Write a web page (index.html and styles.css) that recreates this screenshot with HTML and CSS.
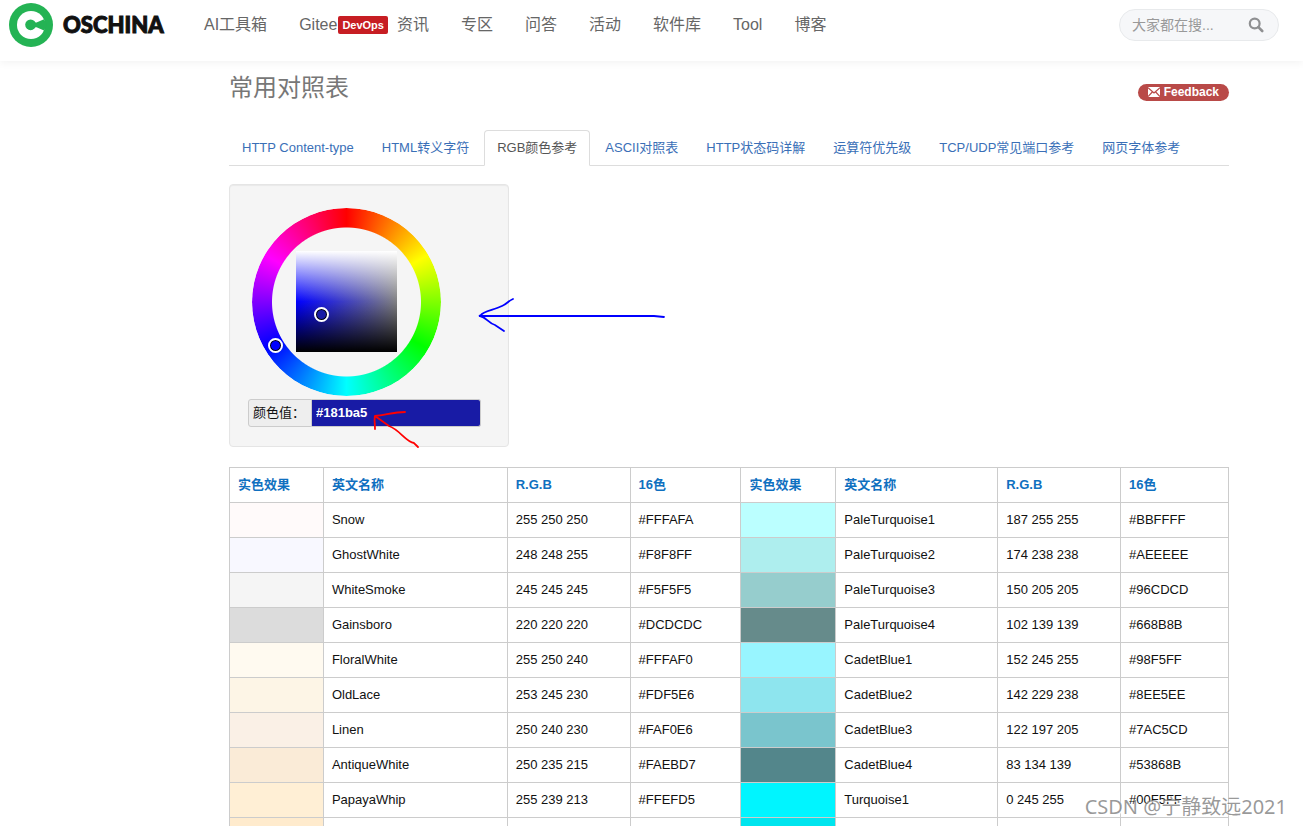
FILE: index.html
```html
<!DOCTYPE html>
<html lang="zh-CN">
<head>
<meta charset="utf-8">
<title>常用对照表</title>
<link rel="stylesheet" href="styles.css">
</head>
<body>
<div class="page">
  <header class="site-header">
    <a class="logo" href="#">
      <svg class="logo-mark" viewBox="0 0 44 44" aria-hidden="true">
        <circle cx="22" cy="22" r="22" fill="#24b354"/>
        <circle cx="22" cy="22" r="14" fill="#fff"/>
        <circle cx="21.6" cy="21.8" r="5.4" fill="#24b354"/>
        <path d="M22 19.6H27.5L35 16.2L38 22L35 27.6L27.5 24.2H22Z" fill="#24b354"/>
      </svg>
      <span class="logo-text">OSCHINA</span>
    </a>
    <nav class="main-nav">
      <a href="#">AI工具箱</a>
      <a class="with-badge" href="#">Gitee<span class="badge">DevOps</span></a>
      <a href="#">资讯</a>
      <a href="#">专区</a>
      <a href="#">问答</a>
      <a href="#">活动</a>
      <a href="#">软件库</a>
      <a href="#">Tool</a>
      <a href="#">博客</a>
    </nav>
    <form class="search">
      <input class="search-input" type="text" placeholder="大家都在搜..." aria-label="搜索">
      <button class="search-button" type="button" aria-label="搜索">
        <svg viewBox="0 0 16 16" aria-hidden="true"><circle cx="6.7" cy="6.5" r="4.9" fill="none" stroke="#8f9092" stroke-width="2.2"/><path d="M10.4 10.2L14.2 14" stroke="#8f9092" stroke-width="2.6" stroke-linecap="round"/></svg>
      </button>
    </form>
  </header>

  <main class="content">
    <div class="title-row">
      <h1>常用对照表</h1>
      <a class="feedback" href="#">
        <svg viewBox="0 0 12 10" aria-hidden="true"><path d="M0 0H12V10H0Z" fill="#fff"/><path d="M0 .6L6 6L12 .6M0 9.6L4.3 5M12 9.6L7.7 5" fill="none" stroke="#b94a48" stroke-width="1.2"/></svg>
        Feedback
      </a>
    </div>

    <nav class="tabs">
      <a href="#">HTTP Content-type</a>
      <a href="#">HTML转义字符</a>
      <a class="active" href="#">RGB颜色参考</a>
      <a href="#">ASCII对照表</a>
      <a href="#">HTTP状态码详解</a>
      <a href="#">运算符优先级</a>
      <a href="#">TCP/UDP常见端口参考</a>
      <a href="#">网页字体参考</a>
    </nav>

    <section class="picker">
      <div class="wheel">
        <div class="ring"></div>
        <div class="shade"></div>
        <span class="marker marker-hue"></span>
        <span class="marker marker-shade"></span>
      </div>
      <div class="color-field">
        <label for="color">颜色值：</label>
        <input id="color" type="text" value="#181ba5">
      </div>
      <svg class="pen" viewBox="0 0 440 160" aria-hidden="true">
        <path d="M283 14C278 16 277 19 272 21C264 25 253 26 251 30L249 31L424 31L434 32" fill="none" stroke="#00f" stroke-width="1.8" stroke-linecap="round"/>
        <path d="M250 31C256 32 258 38 265 40L274 46" fill="none" stroke="#00f" stroke-width="1.8" stroke-linecap="round"/>
        <path d="M175 127C165 127 155 130 145 131C144 134 145 138 145 144M145 131L159 141C170 145 176 157 184 158L188 162" fill="none" stroke="#f00" stroke-width="1.8" stroke-linecap="round"/>
      </svg>
    </section>

    <table class="colors">
      <thead>
        <tr><th class="w-a">实色效果</th><th class="w-b">英文名称</th><th class="w-c">R.G.B</th><th class="w-d">16色</th><th class="w-e">实色效果</th><th class="w-f">英文名称</th><th class="w-c">R.G.B</th><th class="w-g">16色</th></tr>
      </thead>
      <tbody>
        <tr><td style="background:#fffafa"></td><td>Snow</td><td>255 250 250</td><td>#FFFAFA</td><td style="background:#bbffff"></td><td>PaleTurquoise1</td><td>187 255 255</td><td>#BBFFFF</td></tr>
        <tr><td style="background:#f8f8ff"></td><td>GhostWhite</td><td>248 248 255</td><td>#F8F8FF</td><td style="background:#aeeeee"></td><td>PaleTurquoise2</td><td>174 238 238</td><td>#AEEEEE</td></tr>
        <tr><td style="background:#f5f5f5"></td><td>WhiteSmoke</td><td>245 245 245</td><td>#F5F5F5</td><td style="background:#96cdcd"></td><td>PaleTurquoise3</td><td>150 205 205</td><td>#96CDCD</td></tr>
        <tr><td style="background:#dcdcdc"></td><td>Gainsboro</td><td>220 220 220</td><td>#DCDCDC</td><td style="background:#668b8b"></td><td>PaleTurquoise4</td><td>102 139 139</td><td>#668B8B</td></tr>
        <tr><td style="background:#fffaf0"></td><td>FloralWhite</td><td>255 250 240</td><td>#FFFAF0</td><td style="background:#98f5ff"></td><td>CadetBlue1</td><td>152 245 255</td><td>#98F5FF</td></tr>
        <tr><td style="background:#fdf5e6"></td><td>OldLace</td><td>253 245 230</td><td>#FDF5E6</td><td style="background:#8ee5ee"></td><td>CadetBlue2</td><td>142 229 238</td><td>#8EE5EE</td></tr>
        <tr><td style="background:#faf0e6"></td><td>Linen</td><td>250 240 230</td><td>#FAF0E6</td><td style="background:#7ac5cd"></td><td>CadetBlue3</td><td>122 197 205</td><td>#7AC5CD</td></tr>
        <tr><td style="background:#faebd7"></td><td>AntiqueWhite</td><td>250 235 215</td><td>#FAEBD7</td><td style="background:#53868b"></td><td>CadetBlue4</td><td>83 134 139</td><td>#53868B</td></tr>
        <tr><td style="background:#ffefd5"></td><td>PapayaWhip</td><td>255 239 213</td><td>#FFEFD5</td><td style="background:#00f5ff"></td><td>Turquoise1</td><td>0 245 255</td><td>#00F5FF</td></tr>
        <tr><td style="background:#ffebcd"></td><td></td><td></td><td></td><td style="background:#00e5ee"></td><td></td><td></td><td></td></tr>
      </tbody>
    </table>
  </main>
  <div class="watermark">CSDN @宁静致远2021</div>
</div>
</body>
</html>
```

FILE: styles.css
```css
* { box-sizing: border-box; }

body {
  margin: 0;
  background: #fff;
  color: #111;
  font: 13px/18px "Liberation Sans", "Noto Sans CJK SC", sans-serif;
}

a { text-decoration: none; }

.page {
  position: relative;
  height: 100vh;
  overflow: hidden;
}

.site-header {
  display: flex;
  align-items: flex-start;
  height: 61px;
  padding: 0 24px 0 9px;
  box-shadow: 0 2px 8px rgba(0, 0, 0, 0.05);
}

.logo {
  display: flex;
  align-items: center;
  gap: 10px;
  width: 195px;
  padding-top: 3px;
  color: #111;
}

.logo-mark { width: 44px; height: 44px; }

.logo-text {
  font: 900 22px/32px Lato, sans-serif;
  -webkit-text-stroke: 1px #111;
}

.main-nav {
  display: flex;
  gap: 32px;
  flex: 1;
  padding-top: 13px;
  font-size: 16px;
  line-height: 24px;
  white-space: nowrap;
}

.main-nav a { color: #666; }

.main-nav .with-badge {
  display: flex;
  align-items: center;
  gap: 1px;
  margin-right: -23px;
}

.badge {
  padding: 0 4px;
  border-radius: 2px;
  background: #c71d23;
  color: #fff;
  font-size: 11px;
  font-weight: bold;
  line-height: 18px;
}

.search {
  display: flex;
  align-items: center;
  width: 160px;
  height: 32px;
  margin-top: 9px;
  padding: 0 14px 0 12px;
  border: 1px solid #e8eaec;
  border-radius: 16px;
  background: #f6f7f9;
}

.search-input {
  flex: 1;
  min-width: 0;
  padding: 0;
  border: 0;
  outline: 0;
  background: none;
  font: 14px/20px "Liberation Sans", "Noto Sans CJK SC", sans-serif;
}

.search-input::placeholder { color: #999; }

.search-button {
  padding: 0;
  border: 0;
  background: none;
}

.search-button svg { display: block; width: 16px; height: 16px; }

.content { padding: 9px 74px 0 229px; }

.title-row {
  display: flex;
  align-items: center;
  justify-content: space-between;
}

h1 {
  margin: 0;
  color: #777;
  font-size: 24px;
  font-weight: normal;
  line-height: 36px;
}

.feedback {
  display: flex;
  align-items: center;
  gap: 4px;
  height: 17px;
  margin-top: 8px;
  padding: 0 10px;
  border-radius: 9px;
  background: #b94a48;
  color: #fff;
  font-size: 12px;
  font-weight: bold;
  line-height: 17px;
}

.feedback svg { width: 12px; height: 10px; }

.tabs {
  display: flex;
  gap: 2px;
  margin-top: 24px;
  border-bottom: 1px solid #ddd;
  white-space: nowrap;
}

.tabs a {
  margin-bottom: -1px;
  padding: 8px 12px;
  border: 1px solid transparent;
  border-radius: 4px 4px 0 0;
  color: #3a6fb7;
}

.tabs .active {
  border-color: #ddd #ddd #fff;
  background: #fff;
  color: #555;
}

.picker {
  position: relative;
  width: 280px;
  margin: 18px 0 20px;
  padding: 19px 18px;
  border: 1px solid #e5e5e5;
  border-radius: 4px;
  background: #f5f5f5;
  box-shadow: inset 0 1px 1px rgba(0, 0, 0, 0.05);
}

.wheel {
  position: relative;
  width: 195px;
  height: 195px;
}

.ring {
  position: absolute;
  inset: 4px 2px 3px 4px;
  border-radius: 50%;
  background: conic-gradient(#f00, #ff0, #0f0, #0ff, #00f, #f0f, #f00);
  mask: radial-gradient(circle, transparent 74px, #000 75px);
}

.shade {
  position: absolute;
  left: 48px;
  top: 47px;
  width: 101px;
  height: 101px;
  background:
    linear-gradient(#fff, rgba(255, 255, 255, 0) 50%, rgba(0, 0, 0, 0) 50%, #000),
    linear-gradient(to right, #00f, #808080);
}

.marker {
  position: absolute;
  width: 15px;
  height: 15px;
  border: 2px solid #fff;
  border-radius: 50%;
  box-shadow: inset 0 0 0 1px #000;
}

.marker-hue { left: 20px; top: 134px; background: #00f; }
.marker-shade { left: 66px; top: 103px; background: #181ba5; }

.color-field {
  display: flex;
  width: 233px;
  height: 28px;
}

.color-field label {
  width: 64px;
  padding: 4px;
  border: 1px solid #ccc;
  border-radius: 3px 0 0 3px;
  background: #eee;
  white-space: nowrap;
}

.color-field input {
  flex: 1;
  min-width: 0;
  padding: 0 4px;
  border: 1px solid #ccc;
  border-left: 0;
  border-radius: 0 3px 3px 0;
  outline: 0;
  background: #181ba5;
  color: #fff;
  font: bold 13px/18px "Liberation Sans", sans-serif;
}

.pen {
  position: absolute;
  left: 0;
  top: 100px;
  width: 440px;
  height: 160px;
  overflow: visible;
  pointer-events: none;
}

.colors {
  width: 100%;
  border-collapse: collapse;
  table-layout: fixed;
}

.colors th,
.colors td {
  height: 35px;
  padding: 8px;
  border: 1px solid #ccc;
  text-align: left;
}

.colors th { color: #0f70c0; }

.w-a { width: 9.4%; }
.w-b { width: 18.4%; }
.w-c { width: 12.3%; }
.w-d { width: 11.1%; }
.w-e { width: 9.5%; }
.w-f { width: 16.2%; }
.w-g { width: 10.8%; }

.watermark {
  position: absolute;
  right: 16px;
  bottom: 6px;
  color: rgba(120, 120, 120, 0.75);
  font: 20px/26px "Noto Sans", "Noto Sans CJK SC", sans-serif;
  text-shadow: 1px 1px 1px #fff;
}
```
